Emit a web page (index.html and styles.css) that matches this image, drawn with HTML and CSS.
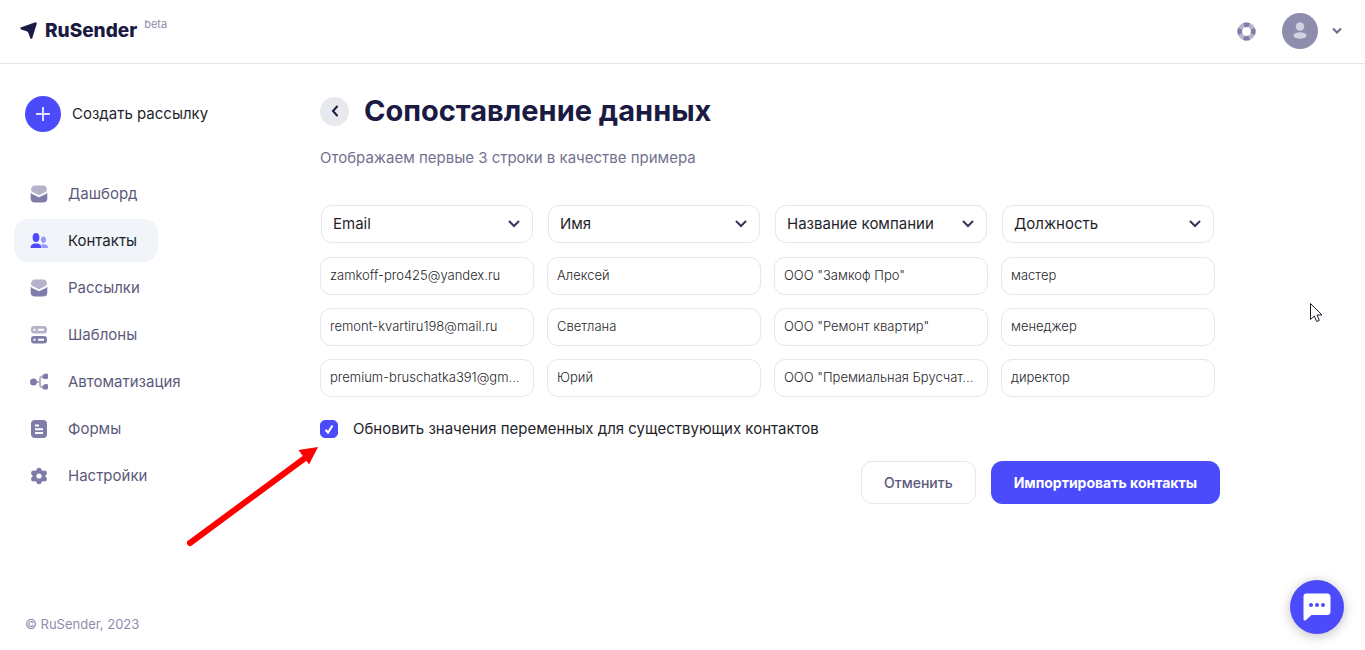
FILE: index.html
```html
<!DOCTYPE html>
<html lang="ru">
<head>
<meta charset="utf-8">
<meta name="viewport" content="width=device-width, initial-scale=1">
<title>RuSender</title>
<link rel="stylesheet" href="styles.css">
</head>
<body>
<header class="topbar">
  <a class="logo" href="#">
    <svg width="18" height="18" viewBox="0 0 18 18" aria-hidden="true"><path d="M1.300 5.300 14.700.400Q17.300 0 16.600 2.200L12.300 15.900Q11.400 17.600 10.200 15.900L8.500 11.200Q8 10 6.700 9.300L1.200 7.400Q-.600 6.200 1.300 5.300Z"/></svg>
    <span class="logo-name">RuSender</span>
    <span class="beta">beta</span>
  </a>
  <div class="account">
    <button class="plain" type="button" aria-label="Помощь">
      <svg width="19" height="19" viewBox="0 0 19 19" fill="none" stroke-width="4.600"><circle cx="9.500" cy="9.500" r="6.800" stroke="#b5b4cc"/><circle cx="9.500" cy="9.500" r="6.800" stroke="#7f7caa" pathLength="80" stroke-dasharray="10 10" stroke-dashoffset="5"/></svg>
    </button>
    <button class="plain profile" type="button" aria-label="Профиль">
      <span class="avatar"><svg width="14" height="18" viewBox="0 0 14 18"><circle cx="7" cy="4.500" r="4.300"/><ellipse cx="7" cy="13.500" rx="6.500" ry="3.300"/></svg></span>
      <svg width="10" height="8" viewBox="0 0 10 8" fill="none" stroke="#69678f" stroke-width="2"><path d="M1 1.500 5 5.500 9 1.500"/></svg>
    </button>
  </div>
</header>
<div class="layout">
  <aside class="sidebar">
    <button class="plain create" type="button">
      <span class="plus"><svg width="16" height="16" viewBox="0 0 16 16" stroke="#dedeff" stroke-width="2"><path d="M8 1v14M1 8h14"/></svg></span>
      Создать рассылку
    </button>
    <nav class="menu">
      <a href="#"><svg viewBox="0 0 18 18"><path class="soft" d="M1 5.500Q1 .500 5 .500h8q4 0 4 5L15.500 7 9 10.200 2.500 7Z"/><path d="M.700 7.500Q1.500 9 3 9.500l6 2.800 6-2.800q1.500-.500 2.300-2v6q0 4-4.300 4H5q-4.300 0-4.300-4Z"/></svg>Дашборд</a>
      <a class="active" href="#" aria-current="page"><svg viewBox="0 0 18 18"><ellipse cx="6" cy="5.500" rx="3.400" ry="4.500"/><path d="M.500 16q0-4 4-4.500h3q4 .500 4 4.500Z"/><path class="pale" d="M13.500 4.500c3.300 0 3.300 6.500 0 6.500s-3.300-6.500 0-6.500ZM12.300 16q0-2.500-1.400-3.700h3.300q3.800 0 3.800 3.700Z"/></svg>Контакты</a>
      <a href="#"><svg viewBox="0 0 18 18"><path class="soft" d="M1 5.500Q1 .500 5 .500h8q4 0 4 5L15.500 7 9 10.200 2.500 7Z"/><path d="M.700 7.500Q1.500 9 3 9.500l6 2.800 6-2.800q1.500-.500 2.300-2v6q0 4-4.300 4H5q-4.300 0-4.300-4Z"/></svg>Рассылки</a>
      <a href="#"><svg viewBox="0 0 18 18"><path class="soft" fill-rule="evenodd" d="M4 0h10q3 0 3 3v1.500q0 3-3 3H4q-3 0-3-3V3q0-3 3-3ZM3.500 2.800v2h2v-2Zm4.500 0v2h6v-2Z"/><path fill-rule="evenodd" d="M4 10h10q3 0 3 3v1.500q0 3-3 3H4q-3 0-3-3V13q0-3 3-3Zm-.500 2.800v2h2v-2Zm4.500 0v2h6v-2Z"/></svg>Шаблоны</a>
      <a href="#"><svg viewBox="0 0 18 18"><path class="wire" d="M6 9h4M15 3.500h-2q-3 0-3 3v5q0 3 3 3h2"/><circle cx="3.500" cy="9" r="3.500"/><path d="M14 1q4-1 4 .500v3q0 1.500-1.500 1.500h-2q-2 0-2-2V2.500ZM14 11.500q4-1 4 .500v3q0 1.500-1.500 1.500h-2q-2 0-2-2V13Z"/></svg>Автоматизация</a>
      <a href="#"><svg viewBox="0 0 18 18"><rect x="1" y="0" width="16" height="18" rx="4"/><path class="lines" d="M5 5.500h4M5 9.300h8M5 13h8"/></svg>Формы</a>
      <a href="#"><svg viewBox="0 0 18 18"><circle cx="9" cy="9" r="6.500"/><circle cx="9" cy="3.200" r="2.500"/><circle cx="9" cy="14.800" r="2.500"/><circle cx="3.600" cy="6" r="2.500"/><circle cx="14.400" cy="6" r="2.500"/><circle cx="3.600" cy="12" r="2.500"/><circle cx="14.400" cy="12" r="2.500"/><circle cx="9" cy="9" r="2.600" fill="#fff"/></svg>Настройки</a>
    </nav>
    <footer class="copyright">© RuSender, 2023</footer>
  </aside>
  <main class="content">
    <div class="heading">
      <button class="back" type="button" aria-label="Назад"><svg width="8" height="12" viewBox="0 0 8 12" fill="none" stroke="#1b1a42" stroke-width="2" stroke-linecap="round"><path d="M6 1.500 2 6l4 4.500"/></svg></button>
      <h1>Сопоставление данных</h1>
    </div>
    <p class="hint">Отображаем первые 3 строки в качестве примера</p>
    <form>
      <table class="mapping">
        <thead>
          <tr>
            <th><span class="picker"><select aria-label="Столбец 1"><option>Email</option></select><svg viewBox="0 0 12 8"><path d="M1.500 1.500 6 6l4.500-4.500"/></svg></span></th>
            <th><span class="picker"><select aria-label="Столбец 2"><option>Имя</option></select><svg viewBox="0 0 12 8"><path d="M1.500 1.500 6 6l4.500-4.500"/></svg></span></th>
            <th><span class="picker"><select aria-label="Столбец 3"><option>Название компании</option></select><svg viewBox="0 0 12 8"><path d="M1.500 1.500 6 6l4.500-4.500"/></svg></span></th>
            <th><span class="picker"><select aria-label="Столбец 4"><option>Должность</option></select><svg viewBox="0 0 12 8"><path d="M1.500 1.500 6 6l4.500-4.500"/></svg></span></th>
          </tr>
        </thead>
        <tbody>
          <tr><td><div class="value">zamkoff-pro425@yandex.ru</div></td><td><div class="value">Алексей</div></td><td><div class="value">ООО "Замкоф Про"</div></td><td><div class="value">мастер</div></td></tr>
          <tr><td><div class="value">remont-kvartiru198@mail.ru</div></td><td><div class="value">Светлана</div></td><td><div class="value">ООО "Ремонт квартир"</div></td><td><div class="value">менеджер</div></td></tr>
          <tr><td><div class="value">premium-bruschatka391@gm...</div></td><td><div class="value">Юрий</div></td><td><div class="value">ООО "Премиальная Брусчат...</div></td><td><div class="value">директор</div></td></tr>
        </tbody>
      </table>
      <div class="update">
        <span class="check"><input type="checkbox" id="update" checked><svg width="18" height="18" viewBox="0 0 18 18"><path d="M5.500 9.800 8 12.500l4.500-7"/></svg></span>
        <label for="update">Обновить значения переменных для существующих контактов</label>
        <svg class="arrow" width="132" height="102" viewBox="0 0 132 102" aria-hidden="true"><path d="M4 97 119 12" stroke="#f00" stroke-width="6" stroke-linecap="round"/><path d="M132 1 112.500 4 123 18.500Z" fill="#f00"/></svg>
      </div>
      <div class="actions">
        <button class="btn" type="button">Отменить</button>
        <button class="btn primary" type="submit">Импортировать контакты</button>
      </div>
    </form>
  </main>
</div>
<svg class="cursor" width="13" height="20" viewBox="0 0 13 20" aria-hidden="true"><path d="M.500.500v16L4.300 13l2.400 5.500 2.600-1.100L7 12h5Z" fill="#fff" stroke="#1c1a2b"/></svg>
<button class="chat" type="button" aria-label="Чат"><svg width="28" height="28" viewBox="0 0 28 28"><path d="M3.500.500H24q3.500 0 3.500 3.500v14.500q0 3.500-3.500 3.500H8.500L3 27q-2.500 1.500-2.500-1.500V3.500Q.500.500 3.500.500Z" fill="#fff"/><g fill="#4b4bfc"><circle cx="8" cy="12" r="2"/><circle cx="14" cy="12" r="2"/><circle cx="20" cy="12" r="2"/></g></svg></button>
</body>
</html>
```
FILE: styles.css
```css
* { box-sizing: border-box; }
body {
  margin: 0;
  position: relative;
  min-height: 100vh;
  display: flex;
  flex-direction: column;
  background: #fff;
  color: #1f1f2b;
  font: 400 15px/20px Inter, "Liberation Sans", sans-serif;
}
button, select { font: inherit; color: inherit; }
a { color: inherit; text-decoration: none; }
.topbar {
  height: 64px;
  padding: 0 23px 1px 20px;
  display: flex;
  align-items: center;
  justify-content: space-between;
  border-bottom: 1px solid #e6e6e8;
}
.logo { display: flex; align-items: center; gap: 7px; fill: #1b1a42; color: #1b1a42; }
.logo-name { font-size: 19px; font-weight: 800; }
.beta { font-size: 11px; line-height: 12px; color: #8e8dae; align-self: flex-start; margin-top: -3px; }
.plain { padding: 0; border: 0; background: none; display: flex; align-items: center; cursor: pointer; }
.account { display: flex; align-items: center; gap: 26px; }
.profile { gap: 14px; }
.avatar {
  width: 36px;
  height: 36px;
  display: grid;
  place-items: center;
  border-radius: 50%;
  background: #8e8dae;
  fill: #d2d1df;
}
.layout { flex: 1; display: flex; }
.sidebar { width: 320px; flex: none; padding: 32px 0 16px; display: flex; flex-direction: column; }
.create { margin-left: 25px; gap: 11px; }
.plus {
  width: 36px;
  height: 36px;
  display: grid;
  place-items: center;
  border-radius: 50%;
  background: #4b4bfc;
}
.menu {
  margin: 40px 0 40px 14px;
  display: flex;
  flex-direction: column;
  align-items: flex-start;
  gap: 4px;
  color: #5c5a7c;
  fill: #7f7caa;
}
.menu a { height: 43px; padding: 0 21px 0 16px; display: flex; align-items: center; gap: 20px; border-radius: 14px; }
.menu svg { width: 18px; height: 18px; }
.menu .active { background: #f1f5fa; color: #1f1f2b; fill: #4b4bfc; }
.menu .soft { fill: #b4b3ca; }
.menu .pale { fill: #9696ff; }
.wire { fill: none; stroke: #b4b3ca; stroke-width: 2; }
.lines { stroke: #fff; stroke-width: 2; }
.copyright { margin: auto 0 0 25px; font-size: 13px; color: #8e8dae; }
.content { flex: 1; min-width: 0; max-width: 900px; padding-top: 28px; }
.heading { display: flex; align-items: center; gap: 15px; }
.back {
  width: 29px;
  height: 29px;
  padding: 0;
  display: grid;
  place-items: center;
  border: 0;
  border-radius: 50%;
  background: #e8e8ef;
}
h1 { margin: 0; font-size: 29px; line-height: 38px; font-weight: 700; color: #1b1a42; }
.hint { margin: 18px 0 37px; color: #737190; }
.mapping { width: calc(100% + 8px); table-layout: fixed; border-collapse: collapse; }
th { padding: 0 14px 14px 1px; font-weight: 400; }
td { padding: 0 13px 13px 0; }
.picker { display: block; position: relative; }
.picker svg {
  position: absolute;
  right: 13px;
  top: 15px;
  width: 12px;
  height: 8px;
  fill: none;
  stroke: #37345f;
  stroke-width: 2;
  stroke-linecap: round;
  pointer-events: none;
}
select {
  display: block;
  width: 100%;
  height: 38px;
  padding: 0 28px 0 11px;
  appearance: none;
  border: 1px solid #e6e6ec;
  border-radius: 11px;
  background: #fff;
}
.value {
  height: 38px;
  padding: 0 9px;
  overflow: hidden;
  white-space: nowrap;
  text-overflow: ellipsis;
  border: 1px solid #e6e6ec;
  border-radius: 11px;
  font-size: 13px;
  font-weight: 300;
  line-height: 35px;
}
.update { position: relative; margin-top: 9px; display: flex; align-items: center; gap: 15px; }
.check { position: relative; width: 18px; height: 18px; }
.check input { appearance: none; display: block; width: 18px; height: 18px; margin: 0; border: 1px solid #4b4bfc; border-radius: 5px; }
.check input:checked { background: #4b4bfc; }
.check svg { position: absolute; inset: 0; fill: none; stroke: #fff; stroke-width: 2; pointer-events: none; }
.arrow { position: absolute; right: 100%; top: 27px; margin-right: 2px; fill: none; }
.actions { margin-top: 22px; display: flex; justify-content: flex-end; gap: 15px; }
.btn {
  height: 43px;
  padding: 0 22px;
  border: 1px solid #e6e6ec;
  border-radius: 11px;
  background: #fff;
  color: #5c5a7c;
  font-size: 14px;
  font-weight: 500;
}
.primary { border-color: #4b4bfc; background: #4b4bfc; color: #fff; font-weight: 700; }
.cursor { position: absolute; left: 1310px; top: 303px; }
.chat {
  position: fixed;
  right: 21px;
  bottom: 16px;
  width: 54px;
  height: 54px;
  padding: 0;
  display: grid;
  place-items: center;
  border: 0;
  border-radius: 50%;
  background: #4b4bfc;
  box-shadow: 0 2px 12px rgba(0, 0, 0, .25);
}
```
